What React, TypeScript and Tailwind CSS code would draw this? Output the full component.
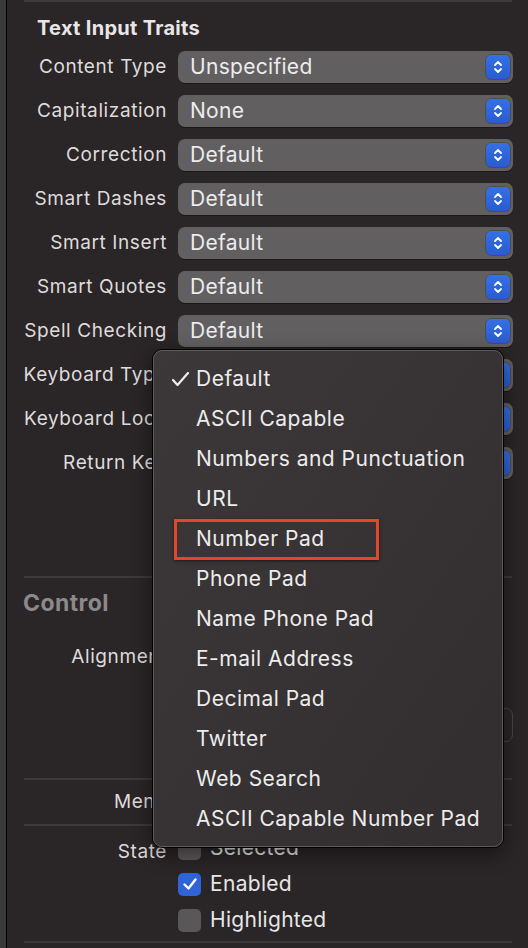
import { FC } from "react";

const font = { fontFamily: "Inter, 'Noto Sans', sans-serif" };

const Stepper: FC = () => (
  <div className="w-[24px] h-[24px] rounded-[5px] bg-gradient-to-b from-[#3570e4] to-[#2a5bd2] flex items-center justify-center shadow-[0_0_0_0.5px_rgba(0,0,0,0.4)]">
    <svg width="10" height="16" viewBox="0 0 10 16" fill="none">
      <path d="M2 6 L5 3 L8 6" stroke="white" strokeWidth="1.8" strokeLinecap="round" strokeLinejoin="round" />
      <path d="M2 10 L5 13 L8 10" stroke="white" strokeWidth="1.8" strokeLinecap="round" strokeLinejoin="round" />
    </svg>
  </div>
);

const Popup: FC<{ value: string }> = ({ value }) => (
  <div className="w-[335px] h-[32px] rounded-[7px] bg-[#625f61] shadow-[0_1px_0_rgba(0,0,0,0.35)] flex items-center justify-between pl-[12px] pr-[3px]">
    <span className="text-[21px] tracking-[0.3px] text-[#ececec]">{value}</span>
    <Stepper />
  </div>
);

const Row: FC<{ label: string; value?: string }> = ({ label, value }) => (
  <div className="h-[44px] flex items-center">
    <div className="w-[160px] text-right text-[19px] tracking-[0.6px] text-[#dedbdc] whitespace-nowrap">{label}</div>
    <div className="ml-[11px]">{value !== undefined && <Popup value={value} />}</div>
  </div>
);

const Separator: FC = () => <div className="ml-[17px] w-[488px] h-[2px] bg-[#3d393b]" />;

const Checkbox: FC<{ label: string; checked?: boolean }> = ({ label, checked }) => (
  <div className="flex items-center gap-[9px] h-[36px]">
    <div
      className={
        checked
          ? "w-[23px] h-[23px] rounded-[5px] bg-[#2f63d8] flex items-center justify-center"
          : "w-[23px] h-[23px] rounded-[5px] bg-[#5a5759]"
      }
    >
      {checked && (
        <svg width="16" height="14" viewBox="0 0 16 14" fill="none">
          <path d="M2.5 7.5 L6.5 11.5 L13.5 2.5" stroke="white" strokeWidth="2.4" strokeLinecap="round" strokeLinejoin="round" />
        </svg>
      )}
    </div>
    <span className="text-[21px] tracking-[0.3px] text-[#e6e6e6]">{label}</span>
  </div>
);

const items = [
  "Default",
  "ASCII Capable",
  "Numbers and Punctuation",
  "URL",
  "Number Pad",
  "Phone Pad",
  "Name Phone Pad",
  "E-mail Address",
  "Decimal Pad",
  "Twitter",
  "Web Search",
  "ASCII Capable Number Pad",
];

const Menu: FC = () => (
  <div className="absolute left-[152px] top-[349px] w-[352px] h-[499px] rounded-[10px] border border-black shadow-[0_6px_20px_rgba(0,0,0,0.45)]">
    <div className="w-full h-full rounded-[9px] border border-[#5f5b5c] bg-gradient-to-br from-[#3c3738] to-[#322d2e] pt-[8px]">
      {items.map((item, i) => (
        <div key={item} className="h-[40px] flex items-center relative">
          <div className="w-[42px] flex justify-end pr-[6px]">
            {i === 0 && (
              <svg width="19" height="16" viewBox="0 0 19 16" fill="none">
                <path d="M2 9 L6.5 14 L17 2" stroke="#eeeeee" strokeWidth="2.2" strokeLinecap="round" strokeLinejoin="round" />
              </svg>
            )}
          </div>
          <span className="text-[21px] tracking-[0.5px] text-[#ececec] whitespace-nowrap">{item}</span>
          {item === "Number Pad" && (
            <div className="absolute left-[20px] top-[0px] w-[205px] h-[41px] border-[3px] border-[#e2462c] shadow-[0_1px_3px_rgba(0,0,0,0.5)]" />
          )}
        </div>
      ))}
    </div>
  </div>
);

const App: FC = () => {
  return (
    <div className="relative w-[528px] h-[948px] bg-[#2a2527] flex overflow-hidden" style={font}>
      <div className="w-[6px] h-full bg-[#3b3a3b]" />
      <div className="w-[1px] h-full bg-black" />
      <div className="flex-1 flex flex-col">
        <Separator />
        <div className="h-[43px] flex items-center pl-[30px] pt-[9px]">
          <span className="text-[20px] tracking-[0.3px] font-bold text-[#e8e6e7]">Text Input Traits</span>
        </div>
        <Row label="Content Type" value="Unspecified" />
        <Row label="Capitalization" value="None" />
        <Row label="Correction" value="Default" />
        <Row label="Smart Dashes" value="Default" />
        <Row label="Smart Insert" value="Default" />
        <Row label="Smart Quotes" value="Default" />
        <Row label="Spell Checking" value="Default" />
        <Row label="Keyboard Type" value="Default" />
        <Row label="Keyboard Look" value="Default" />
        <Row label="Return Key" value="Default" />
        <div className="h-[91px]" />
        <Separator />
        <div className="h-[50px] flex items-center pl-[16px]">
          <span className="text-[23px] tracking-[0.4px] font-bold text-[#8d898a]">Control</span>
        </div>
        <div className="h-[58px] flex items-center">
          <div className="w-[160px] text-right text-[19px] tracking-[0.6px] text-[#dedbdc] whitespace-nowrap">Alignment</div>
        </div>
        <div className="h-[78px] flex items-center">
          <div className="ml-[171px] w-[335px] h-[34px] rounded-[7px] border border-[#4a4648]" />
        </div>
        <div className="h-[14px]" />
        <Separator />
        <Row label="Menu" />
        <Separator />
        <div className="flex">
          <div className="w-[160px] h-[48px] pt-[4px] flex items-center justify-end text-[19px] tracking-[0.6px] text-[#dedbdc]">State</div>
          <div className="ml-[11px] pt-[4px] flex flex-col">
            <Checkbox label="Selected" />
            <Checkbox label="Enabled" checked />
            <Checkbox label="Highlighted" />
          </div>
        </div>
        <div className="h-[3px]" />
        <Separator />
      </div>
      <Menu />
    </div>
  );
};

export default App;
